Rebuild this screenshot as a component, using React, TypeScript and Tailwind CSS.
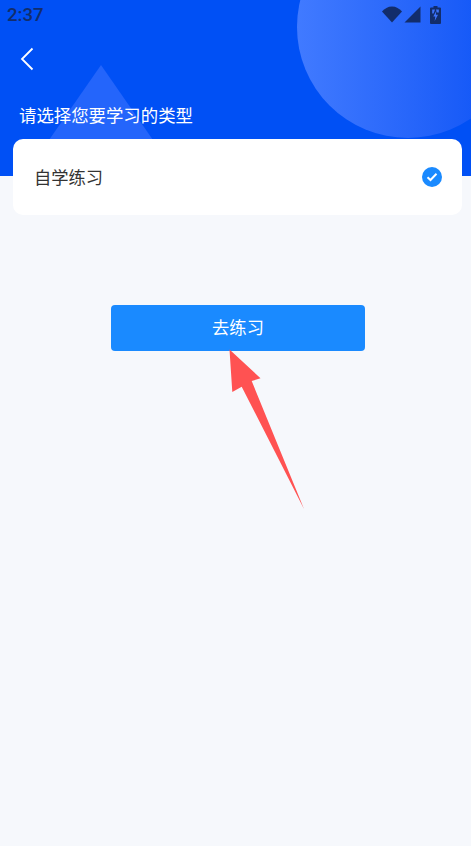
const cjk = "font-['Noto_Sans_CJK_SC','Noto_Sans',sans-serif]";

function StatusIcons() {
  return (
    <div className="flex items-center text-[#122d6b]">
      <svg width="20" height="17" viewBox="0 0 20 17" fill="currentColor">
        <path d="M0 5.500C2.600 2.600 6 .5 10 .5s7.400 2.100 10 5L10 16.500z" />
      </svg>
      <svg width="17" height="17" viewBox="0 0 17 17" fill="currentColor" className="ml-[2px]">
        <path d="M16.500 0.500V16.500H0.500z" />
      </svg>
      <svg width="11" height="18" viewBox="0 0 11 18" fill="currentColor" className="ml-[9px]">
        <path d="M3.500 0h4v1.500H10a1 1 0 0 1 1 1V17a1 1 0 0 1-1 1H1a1 1 0 0 1-1-1V2.500a1 1 0 0 1 1-1h2.500z" />
        <path d="M2.200 3.500H5L3.600 7.500H2.200zM6 3.500h2.800v3H6.800zM6.200 5 3.300 10.500h2l-.6 4.500L8 8.800H5.900z" fill="#3d73fb" />
      </svg>
    </div>
  );
}

export default function App() {
  return (
    <div className={`relative min-h-[846px] w-full overflow-hidden bg-[#f6f8fc] ${cjk}`}>
      <header className="relative h-[176px] overflow-hidden bg-[#0050f5]">
        {/* decorative shapes */}
        <div className="absolute left-[297px] top-[-84px] h-[222px] w-[222px] rounded-full bg-gradient-to-r from-[#417aff] to-[#0650f5]" />
        <svg className="absolute left-[40px] top-[65px]" width="122" height="111" viewBox="0 0 122 111">
          <path d="M61 0 122 88V111H0V88z" fill="#2a68fb" fillOpacity="0.85" />
        </svg>

        <div className="relative flex h-[29px] items-center justify-between pl-[7px] pr-[30px]">
          <span className="mt-[2px] font-['Roboto',sans-serif] text-[18.500px] font-medium leading-none text-[#122d6b]">2:37</span>
          <StatusIcons />
        </div>

        <button className="relative ml-[20px] mt-[18px] block h-[24px] w-[14px]">
          <svg width="14" height="24" viewBox="0 0 14 24" fill="none" stroke="white" strokeWidth="1.800">
            <path d="M12.500 1.500 2 12l10.500 10.500" />
          </svg>
        </button>

        <h1 className="relative ml-[19px] mt-[32px] text-[17.400px] font-normal leading-[24px] text-white">
          请选择您要学习的类型
        </h1>
      </header>

      <section className="relative ml-[13px] mr-[9px] -mt-[37px] flex h-[76px] items-center justify-between rounded-[10px] bg-white pb-[1px] pl-[21px] pr-[20px]">
        <span className="text-[17.300px] text-[#333333]">自学练习</span>
        <span className="flex h-5 w-5 items-center justify-center rounded-full bg-[#1a8aff]">
          <svg width="12" height="10" viewBox="0 0 12 10" fill="none" stroke="white" strokeWidth="2">
            <path d="M1.500 5.200 4.500 8 10.500 1.800" />
          </svg>
        </span>
      </section>

      <button className="ml-[111px] mt-[90px] block h-[46px] w-[254px] rounded-[4px] bg-[#1a8aff] pb-[3px] text-[17.300px] text-white">
        去练习
      </button>

      {/* annotation arrow */}
      <svg className="absolute left-[225px] top-[345px]" width="85" height="168" viewBox="225 345 85 168">
        <path d="M229.500 349.500 260.500 378.300 251.700 381 304 509 241.700 386.700 232.300 392z" fill="#ff5252" />
      </svg>
    </div>
  );
}
